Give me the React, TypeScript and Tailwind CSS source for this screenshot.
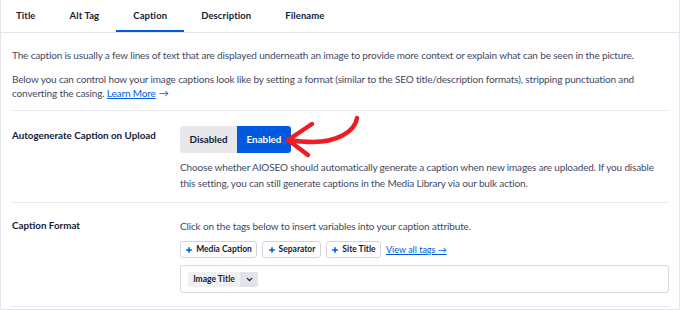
import { Plus, ChevronDown } from "lucide-react";

const tabs = ["Title", "Alt Tag", "Caption", "Description", "Filename"];

function TagButton({ label, w }: { label: string; w: string }) {
  return (
    <button className={`${w} flex items-center justify-center gap-[3px] h-[17px] bg-white border border-[#d4d5dc] rounded-[3px] text-[8.5px] font-bold text-[#141b38]`}>
      <Plus className="h-[8px] w-[8px] text-[#005ae0]" strokeWidth={4.5} />
      {label}
    </button>
  );
}

export default function App() {
  return (
    <div
      className="relative w-[680px] h-[310px] bg-white border-l border-r border-b border-[#e5e6ea] overflow-hidden text-[#141b38]"
      style={{ fontFamily: 'Lato, sans-serif' }}
    >
      {/* Tabs */}
      <div className="flex h-[33px] border-b border-[#e3e4e9]">
        <div className="flex ml-[-2px]">
          {tabs.map(t => (
            <div
              key={t}
              className={`px-[17px] pt-[2px] flex items-center text-[9.5px] font-bold tracking-[0.1px] border-b-2 ${
                t === "Caption" ? "border-[#005ae0]" : "border-transparent"
              }`}
            >
              {t}
            </div>
          ))}
        </div>
      </div>

      <div className="pl-[11px] pr-[10px]">
        {/* Intro */}
        <div className="pt-[15px] pb-[10px] border-b border-[#e8e9ed] text-[10px] tracking-[-0.15px] leading-[14px] text-[#434960]">
          <p className="mb-[10px]">
            The caption is usually a few lines of text that are displayed underneath an image to provide more context or explain what can be seen in the picture.
          </p>
          <p className="pr-[20px]">
            Below you can control how your image captions look like by setting a format (similar to the SEO title/description formats), stripping punctuation and converting the casing.{" "}
            <a className="text-[#005ae0] underline">Learn More</a>
            <span className="inline-block ml-[3px] text-[#005ae0]">→</span>
          </p>
        </div>

        {/* Autogenerate */}
        <div className="flex pt-[15px] pb-[11px] border-b border-[#e8e9ed]">
          <div className="w-[168px] shrink-0 pt-[2px] text-[9.8px] font-bold">Autogenerate Caption on Upload</div>
          <div className="flex flex-col">
            <div className="flex h-[27px] text-[9.8px] font-bold">
              <button className="w-[57px] bg-[#e8e8eb] rounded-l-[3px] text-[#141b38]">Disabled</button>
              <button className="w-[54px] bg-[#005ae0] rounded-r-[3px] text-white">Enabled</button>
            </div>
            <p className="mt-[6px] text-[10px] tracking-[-0.15px] leading-[16px] text-[#434960]">
              Choose whether AIOSEO should automatically generate a caption when new images are uploaded. If you disable this setting, you can still generate captions in the Media Library via our bulk action.
            </p>
          </div>
        </div>

        {/* Caption format */}
        <div className="flex pt-[15px] pb-[13px] border-b border-[#e8e9ed]">
          <div className="w-[168px] shrink-0 text-[9.8px] font-bold">Caption Format</div>
          <div className="flex flex-col flex-1">
            <p className="text-[10px] tracking-[-0.15px] leading-[16px] text-[#434960]">Click on the tags below to insert variables into your caption attribute.</p>
            <div className="flex items-center gap-[5px] mt-[7px]">
              <TagButton label="Media Caption" w="w-[77px]" />
              <TagButton label="Separator" w="w-[59px]" />
              <TagButton label="Site Title" w="w-[55px]" />
              <a className="text-[9px] text-[#005ae0] underline">View all tags →</a>
            </div>
            <div className="mt-[7px] h-[28px] border border-[#d8d9df] rounded-[3px] flex items-center px-[7px]">
              <div className="flex h-[15px] text-[8.5px] font-bold">
                <span className="w-[52px] bg-[#f0f0f3] flex items-center justify-center rounded-l-[2px]">Image Title</span>
                <span className="w-[18px] bg-[#e2e3e8] flex items-center justify-center rounded-r-[2px]">
                  <ChevronDown className="h-[9px] w-[9px]" strokeWidth={3.5} />
                </span>
              </div>
            </div>
          </div>
        </div>
      </div>

      {/* Red annotation arrow */}
      <svg className="absolute left-0 top-0 pointer-events-none" width="680" height="310" viewBox="0 0 680 310">
        <g fill="none" stroke="#ee1c25" strokeWidth="4.5" strokeLinecap="round" strokeLinejoin="round">
          <path d="M356 118 C 354 132, 335 142, 312 142 C 302 142, 294 141, 287 140" />
          <path d="M311 124 L 287 140 L 307 155" />
        </g>
      </svg>
    </div>
  );
}
